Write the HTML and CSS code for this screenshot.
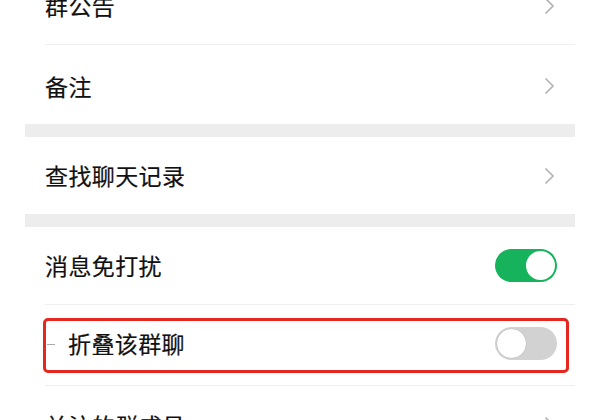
FILE: index.html
```html
<!DOCTYPE html>
<html lang="zh-CN">
<head>
<meta charset="utf-8">
<link rel="stylesheet" href="styles.css">
</head>
<body>
<div class="page">
  <div class="group first">
    <div class="cell"><div class="cell-inner bordered"><span class="label">群公告</span><span class="chev"><svg width="11" height="18" viewBox="0 0 11 18"><path d="M1.5 1.5 L9 9 L1.5 16.5" fill="none" stroke="#b3b3b3" stroke-width="1.7"/></svg></span></div></div>
    <div class="cell"><div class="cell-inner tall"><span class="label">备注</span><span class="chev"><svg width="11" height="18" viewBox="0 0 11 18"><path d="M1.5 1.5 L9 9 L1.5 16.5" fill="none" stroke="#b3b3b3" stroke-width="1.7"/></svg></span></div></div>
  </div>
  <div class="gap"></div>
  <div class="group">
    <div class="cell"><div class="cell-inner short"><span class="label">查找聊天记录</span><span class="chev"><svg width="11" height="18" viewBox="0 0 11 18"><path d="M1.5 1.5 L9 9 L1.5 16.5" fill="none" stroke="#b3b3b3" stroke-width="1.7"/></svg></span></div></div>
  </div>
  <div class="gap"></div>
  <div class="group">
    <div class="cell"><div class="cell-inner bordered"><span class="label">消息免打扰</span><span class="toggle on"><span class="knob"></span></span></div></div>
    <div class="cell highlight"><div class="cell-inner bordered fold"><span class="label shifted">折叠该群聊</span><span class="toggle off"><span class="knob"></span></span></div><div class="redbox"></div></div>
    <div class="cell"><div class="cell-inner"><span class="label">关注的群成员</span><span class="chev"><svg width="11" height="18" viewBox="0 0 11 18"><path d="M1.5 1.5 L9 9 L1.5 16.5" fill="none" stroke="#b3b3b3" stroke-width="1.7"/></svg></span></div></div>
  </div>
</div>
</body>
</html>
```
FILE: styles.css
```css
html, body {
  margin: 0;
  padding: 0;
  background: #ffffff;
  overflow: hidden;
}
body {
  width: 600px;
  height: 420px;
  font-family: "Noto Sans CJK SC", "Noto Sans", sans-serif;
  color: #111111;
}
.page {
  margin: 0 25px;
}
.group {
  background: #fff;
}
.group.first {
  margin-top: -33px;
}
.gap {
  height: 13px;
  background: #ededed;
}
.cell {
  padding-left: 20px;
  position: relative;
}
.cell-inner {
  height: 78px;
  display: flex;
  align-items: center;
  justify-content: space-between;
  padding-right: 18px;
  box-sizing: border-box;
}
.cell-inner.bordered {
  border-bottom: 1px solid #efefef;
}
.cell-inner.tall {
  height: 79px;
  padding-top: 3px;
}
.cell-inner.short {
  height: 77px;
}
.cell-inner.fold {
  height: 81px;
  padding-bottom: 3px;
}
.label {
  font-size: 23px;
  letter-spacing: 0.4px;
  line-height: 1;
  -webkit-text-stroke: 0.2px #111111;
}
.label.shifted {
  margin-left: 23px;
  position: relative;
}
.label.shifted::before {
  content: "";
  position: absolute;
  left: -21px;
  top: 50%;
  width: 8px;
  height: 1px;
  background: #aaaaaa;
}
.chev {
  display: flex;
  margin-right: 2px;
}
.toggle {
  width: 62px;
  height: 33px;
  border-radius: 17px;
  box-sizing: border-box;
  position: relative;
  display: block;
}
.toggle.on {
  background: #16b35c;
}
.toggle.off {
  background: #d2d2d2;
}
.knob {
  position: absolute;
  top: 2px;
  width: 29px;
  height: 29px;
  border-radius: 50%;
  background: #ffffff;
  box-sizing: border-box;
}
.toggle.on .knob {
  right: 2px;
}
.toggle.off .knob {
  left: 1px;
  top: 1px;
  width: 31px;
  height: 31px;
  border: 1px solid #c4c4c4;
}
.redbox {
  position: absolute;
  left: 18px;
  right: 6px;
  top: 13px;
  height: 55px;
  border: 3px solid #e5281f;
  border-radius: 5px;
  box-sizing: border-box;
  pointer-events: none;
}
```
